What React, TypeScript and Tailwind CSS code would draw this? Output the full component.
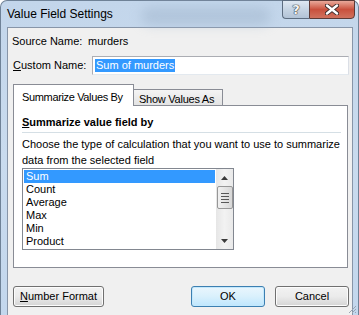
const items = ["Sum", "Count", "Average", "Max", "Min", "Product"];

function TitleButtons() {
    return (
        <div className="absolute right-[3px] top-[-1px] flex">
            <div className="flex h-[19px] w-[27px] items-center justify-center rounded-bl-[4px] border border-r-0 border-[#5d6d80] bg-gradient-to-b from-[#dfe8f2] via-[#c6d4e3] to-[#b2c3d6]">
                <span className="font-['DejaVu_Sans',sans-serif] text-[13px] font-bold leading-none text-[#f4f6f8] [text-shadow:0_0_1px_#333,0_0_1px_#333,0_0_1px_#333]">
                    ?
                </span>
            </div>
            <div className="flex h-[19px] w-[46px] items-center justify-center rounded-br-[4px] border border-[#5d3a36] bg-gradient-to-b from-[#e8a89a] via-[#c9503d] to-[#d0715e]">
                <svg width="14" height="11" viewBox="0 0 14 11">
                    <path d="M2 1.5 L12 9.5 M12 1.5 L2 9.5" stroke="#3b2a2a" strokeWidth="4.2" strokeLinecap="round" />
                    <path d="M2 1.5 L12 9.5 M12 1.5 L2 9.5" stroke="#ffffff" strokeWidth="2.4" strokeLinecap="round" />
                </svg>
            </div>
        </div>
    );
}

function Scrollbar() {
    return (
        <div className="flex w-[17px] flex-col items-center bg-gradient-to-r from-[#e6e6e6] via-[#f2f2f2] to-[#e9e9e9]">
            <div className="flex h-[17px] w-full items-center justify-center">
                <svg width="7" height="4" viewBox="0 0 7 4">
                    <path d="M0 4 L3.5 0 L7 4 Z" fill="#3a3a3a" />
                </svg>
            </div>
            <div className="flex h-[23px] w-[16px] flex-col items-center justify-center gap-[2px] rounded-[2px] border border-[#979797] bg-gradient-to-r from-[#f1f1f1] via-[#e4e4e4] to-[#d7d7d7]">
                <div className="h-px w-[8px] bg-[#585858]" />
                <div className="h-px w-[8px] bg-[#585858]" />
                <div className="h-px w-[8px] bg-[#585858]" />
                <div className="h-px w-[8px] bg-[#585858]" />
            </div>
            <div className="flex-1" />
            <div className="flex h-[17px] w-full items-center justify-center">
                <svg width="7" height="4" viewBox="0 0 7 4">
                    <path d="M0 0 L7 0 L3.5 4 Z" fill="#3a3a3a" />
                </svg>
            </div>
        </div>
    );
}

function Button({ children, primary }: { children: React.ReactNode; primary?: boolean }) {
    return (
        <div
            className={
                primary
                    ? "flex h-[21px] w-[74px] items-center justify-center rounded-[3px] border border-[#3c7fb1] bg-gradient-to-b from-[#eaf6fd] via-[#d9f0fc] to-[#bee6fd] shadow-[inset_0_0_0_1px_#c3e8fc]"
                    : "flex h-[21px] w-[74px] items-center justify-center rounded-[3px] border border-[#707070] bg-gradient-to-b from-[#f2f2f2] via-[#ebebeb] to-[#d4d4d4] shadow-[inset_0_0_0_1px_#fcfcfc]"
            }>
            {children}
        </div>
    );
}

export default function App() {
    return (
        <div className="h-[315px] w-[359px] overflow-hidden bg-white font-['Liberation_Sans',sans-serif] text-[11px] text-black">
            <div className="relative flex h-[315px] w-[359px] flex-col rounded-t-[7px] border border-b-0 border-[#6f8297] bg-gradient-to-b from-[#c3d6eb] via-[#c9dbee] to-[#c3d7ed]">
                <div className="pointer-events-none absolute left-[140px] top-[6px] h-[18px] w-[130px] rounded-full bg-[#9fb4cb] opacity-50 blur-[6px]" />
                <div className="relative flex h-[26px] items-center pl-[6px]">
                    <span className="text-[12px] text-black">Value Field Settings</span>
                    <TitleButtons />
                </div>

                <div className="ml-[6px] mr-[5px] flex flex-1 flex-col border border-b-0 border-[#8795a8] bg-[#f0f0f0] pl-[5px] pr-[3px]">
                    <div className="mt-[7px] flex h-[13px] items-center">
                        <span className="-ml-px w-[76px]">Source Name:</span>
                        <span>murders</span>
                    </div>

                    <div className="mt-[8px] flex h-[19px] items-center">
                        <span className="w-[79px]">
                            <span className="underline underline-offset-1">C</span>ustom Name:
                        </span>
                        <div className="flex h-[19px] flex-1 items-center border border-[#abadb3] border-b-[#e3e9ef] border-r-[#dbdfe6] bg-white pl-[2px]">
                            <span className="bg-[#3399ff] px-px leading-[13px] text-white">Sum of murders</span>
                        </div>
                    </div>

                    <div className="mt-[9px] flex h-[21px] items-end">
                        <div className="relative z-10 -mb-px h-[22px] w-[121px] border border-b-0 border-[#898c95] bg-white pl-[8px] pt-[4px] tracking-[-0.35px]">
                            Summarize Values By
                        </div>
                        <div className="-ml-px h-[16px] w-[90px] border border-b-0 border-[#898c95] bg-gradient-to-b from-[#f4f4f4] to-[#e3e3e3] pl-[5px] pt-[1px] tracking-[-0.25px]">
                            Show Values As
                        </div>
                    </div>

                    <div className="mr-px flex h-[163px] flex-col border border-[#898c95] bg-white pl-[8px] pr-[6px]">
                        <div className="mt-[10px] h-[13px] font-bold leading-[13px]">
                            <span className="underline underline-offset-1">S</span>ummarize value field by
                        </div>
                        <div className="mt-[3px] h-px bg-[#d5dfe5]" />
                        <p className="mt-[3px] leading-[16px]">
                            Choose the type of calculation that you want to use to summarize data from the selected field
                        </p>
                        <div className="flex h-[82px] w-[212px] border border-[#828790] bg-white">
                            <div className="flex flex-1 flex-col pl-px pr-px pt-px">
                                {items.map((it, i) => (
                                    <div
                                        key={it}
                                        className={
                                            i === 0
                                                ? "h-[13px] bg-[#3399ff] pl-[2px] leading-[13px] text-white"
                                                : "h-[13px] pl-[2px] leading-[13px]"
                                        }>
                                        {it}
                                    </div>
                                ))}
                            </div>
                            <Scrollbar />
                        </div>
                    </div>

                    <div className="mt-[18px] flex items-center">
                        <div className="flex h-[21px] w-[91px] items-center justify-center rounded-[3px] border border-[#707070] bg-gradient-to-b from-[#f2f2f2] via-[#ebebeb] to-[#d4d4d4] shadow-[inset_0_0_0_1px_#fcfcfc]">
                            <span>
                                <span className="underline underline-offset-1">N</span>umber Format
                            </span>
                        </div>
                        <div className="flex-1" />
                        <Button primary>OK</Button>
                        <div className="w-[10px]" />
                        <Button>Cancel</Button>
                    </div>
                </div>

                <svg className="absolute bottom-[1px] right-[1px]" width="10" height="10" viewBox="0 0 10 10">
                    <path d="M9 2 L2 9 M9 5 L5 9 M9 8 L8 9" stroke="#9aa5b2" strokeWidth="1" />
                </svg>
            </div>
        </div>
    );
}
